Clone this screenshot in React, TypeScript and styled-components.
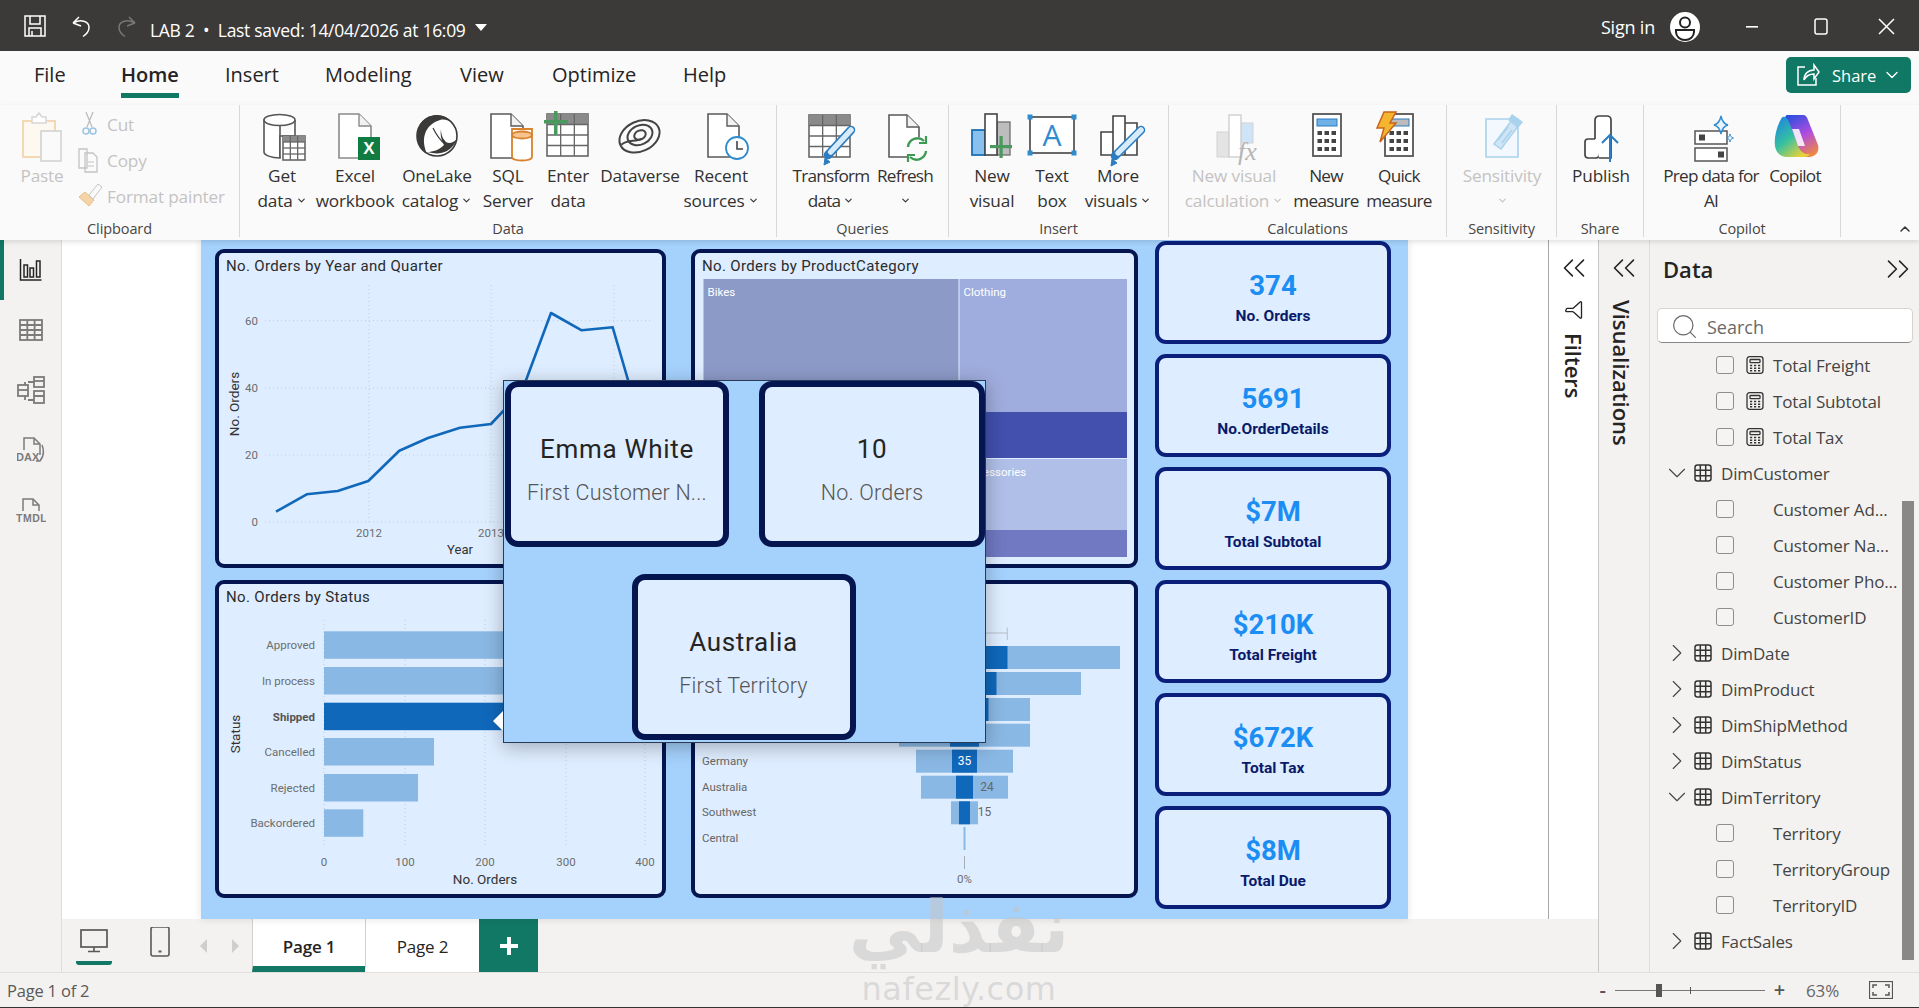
import React from "react"
import styled, { createGlobalStyle } from "styled-components"
import {
  ChevronDown,
  ChevronRight,
  ChevronUp,
  ChevronsLeft,
  ChevronsRight,
  Funnel,
  Search
} from "lucide-react"

const UI_FONT = `"Open Sans", "Noto Sans", sans-serif`
const DIN_FONT = `Roboto, "Liberation Sans", sans-serif`
const GREEN = "#117865"
const NAVY = "#04154f"

const GlobalStyle = createGlobalStyle`
  html, body {
    margin: 0;
    height: 100%;
    overflow: hidden;
    background: #fff;
    font-family: ${UI_FONT};
  }
  * { box-sizing: border-box; }
`

const Shell = styled.div`
  width: 1919px;
  height: 1008px;
  display: flex;
  flex-direction: column;
  position: relative;
  overflow: hidden;
`

/* title bar */
const TitleBar = styled.header`
  height: 51px;
  flex: none;
  background: #3b3a38;
  color: #fff;
  display: flex;
  align-items: center;
  padding-left: 23px;
  font-size: 17.5px;
`
const TitleIcon = styled.svg<{ $gap?: number }>`
  display: block;
  flex: none;
  margin-right: ${p => p.$gap ?? 0}px;
`
const TitleText = styled.span`
  margin: 8px 9px 0 -2px;
  letter-spacing: -0.3px;
  white-space: nowrap;
`
const Caret = styled.span`
  width: 0;
  height: 0;
  border-left: 6.5px solid transparent;
  border-right: 6.5px solid transparent;
  border-top: 7px solid #fff;
  margin-top: 3px;
`
const TitleRight = styled.div`
  margin-left: auto;
  display: flex;
  align-items: center;
  height: 100%;
  padding-top: 2px;
`
const SignIn = styled.span`
  font-size: 18px;
  margin-right: 15px;
  letter-spacing: -0.2px;
`
const Avatar = styled.span`
  width: 30px;
  height: 30px;
  margin-right: 41px;
`
const WinButton = styled.span<{ $ml?: number; $mr?: number }>`
  width: 22px;
  margin-left: ${p => p.$ml ?? 0}px;
  margin-right: ${p => p.$mr ?? 0}px;
  display: flex;
  justify-content: center;
`

/* menu row */
const MenuRow = styled.nav`
  height: 54px;
  flex: none;
  background: #fafafa;
  display: flex;
  padding-left: 34px;
  position: relative;
`
const MenuTab = styled.div<{ $w: number }>`
  width: ${p => p.$w}px;
  flex: none;
`
const MenuLabel = styled.span<{ $active?: boolean }>`
  display: inline-block;
  height: 47px;
  font-size: 20px;
  line-height: 48px;
  color: #252423;
  font-weight: ${p => (p.$active ? 600 : 400)};
  border-bottom: ${p => (p.$active ? `5px solid ${GREEN}` : "5px solid transparent")};
`
const ShareButton = styled.button`
  position: absolute;
  left: 1786px;
  top: 6px;
  width: 125px;
  height: 36px;
  background: ${GREEN};
  color: #fff;
  border: 0;
  border-radius: 5px;
  display: flex;
  align-items: center;
  gap: 12px;
  padding: 0 0 0 10px;
  font: 400 16.5px ${UI_FONT};
`
const ShareChevron = styled(ChevronDown)`
  margin-left: -6px;
`

/* ribbon */
const Ribbon = styled.section`
  height: 135px;
  flex: none;
  background: #fafafa;
  display: flex;
  position: relative;
  z-index: 3;
  box-shadow: 0 2px 5px rgba(0, 0, 0, 0.12);
`
const Group = styled.div<{ $w: number; $pad: number }>`
  width: ${p => p.$w}px;
  height: 132px;
  flex: none;
  display: flex;
  flex-direction: column;
  border-right: 1px solid #d9d8d6;
  > div:first-child {
    padding-left: ${p => p.$pad}px;
  }
`
const GroupItems = styled.div`
  height: 115px;
  flex: none;
  display: flex;
`
const GroupLabel = styled.div`
  text-align: center;
  font-size: 14.5px;
  line-height: 17px;
  color: #484644;
  letter-spacing: -0.1px;
  white-space: nowrap;
`
const BigButton = styled.div<{ $w: number; $off?: boolean }>`
  width: ${p => p.$w}px;
  flex: none;
  display: flex;
  flex-direction: column;
  align-items: center;
  padding-top: 5px;
  color: ${p => (p.$off ? "#c4c3c2" : "#323130")};
`
const IconBox = styled.svg`
  display: block;
  flex: none;
  overflow: visible;
  margin-bottom: 1px;
`
const BigLine = styled.div<{ $tight?: boolean }>`
  font-size: 17.2px;
  line-height: 25px;
  height: 25px;
  letter-spacing: ${p => (p.$tight ? "-0.75px" : "-0.15px")};
  white-space: nowrap;
  display: flex;
  align-items: center;
  gap: 3px;
`
const SmallColumn = styled.div`
  display: flex;
  flex-direction: column;
  gap: 12px;
  padding-top: 7px;
  margin-left: 10px;
`
const SmallButton = styled.div`
  height: 24px;
  display: flex;
  align-items: center;
  font-size: 17.2px;
  color: #c4c3c2;
  letter-spacing: -0.15px;
  white-space: nowrap;
`
const SmallIconSlot = styled.svg`
  width: 26px;
  height: 24px;
  margin-right: 4px;
  flex: none;
  overflow: visible;
`
const CollapseRibbon = styled.span`
  position: absolute;
  left: 1897px;
  top: 115px;
  color: #333;
`

/* workspace */
const Workspace = styled.main`
  flex: 1;
  display: flex;
  min-height: 0;
`
const Rail = styled.aside`
  width: 62px;
  flex: none;
  background: #f3f2f1;
  border-right: 1px solid #dedddb;
`
const RailItem = styled.div<{ $active?: boolean }>`
  height: 60px;
  display: flex;
  align-items: center;
  justify-content: center;
  border-left: 4px solid ${p => (p.$active ? GREEN : "transparent")};
  padding-right: 4px;
`
const CenterColumn = styled.div`
  width: 1536px;
  flex: none;
  display: flex;
  flex-direction: column;
`
const CanvasRow = styled.div`
  height: 679px;
  flex: none;
  display: flex;
`
const Canvas = styled.div`
  width: 1486px;
  flex: none;
  background: #fff;
  padding-left: 139px;
`
const ReportPage = styled.div`
  width: 1207px;
  height: 679px;
  background: #a5d1fd;
  box-shadow: 0 0 8px rgba(0, 0, 0, 0.12);
  position: relative;
  display: flex;
  padding-left: 14px;
  overflow: hidden;
`
const ChartGrid = styled.div`
  width: 923px;
  padding-top: 9px;
  display: grid;
  grid-template-columns: 451px 447px;
  grid-template-rows: 319px 318px;
  column-gap: 25px;
  row-gap: 12px;
`
const ChartCard = styled.div`
  background: #deedff;
  border: 4px solid ${NAVY};
  border-radius: 9px;
  display: flex;
  flex-direction: column;
  overflow: hidden;
`
const ChartTitle = styled.div`
  height: 26px;
  flex: none;
  padding: 4px 0 0 7px;
  font: 400 15px ${DIN_FONT};
  letter-spacing: 0.35px;
  color: #2b2b2b;
`
const Plot = styled.svg`
  display: block;
  flex: none;
`
const AxisText = styled.text<{ $bold?: boolean; $size?: number; $fill?: string }>`
  font-family: ${DIN_FONT};
  font-size: ${p => p.$size ?? 11.5}px;
  font-weight: ${p => (p.$bold ? 700 : 400)};
  fill: ${p => p.$fill ?? "#6d6d6d"};
  dominant-baseline: middle;
`
const CategoryText = styled.text<{ $fill?: string }>`
  font-family: ${DIN_FONT};
  font-size: 11.5px;
  fill: ${p => p.$fill ?? "#666"};
  dominant-baseline: middle;
`
const KpiColumn = styled.div`
  margin-left: 17px;
  width: 236px;
  padding-top: 1px;
  display: flex;
  flex-direction: column;
  gap: 10px;
`
const KpiCard = styled.div`
  height: 103px;
  flex: none;
  background: #deedff;
  border: 4px solid #0a1f7a;
  border-radius: 11px;
  display: flex;
  flex-direction: column;
  align-items: center;
  color: #0a1a6b;
`
const KpiValue = styled.div`
  margin-top: 24px;
  font: 700 27.5px/34px ${DIN_FONT};
  color: #1c8ef3;
`
const KpiLabel = styled.div`
  margin-top: 4px;
  font: 700 15.5px/18px ${DIN_FONT};
`

/* popup that sits over the report */
const Popup = styled.div`
  position: absolute;
  left: 302px;
  top: 140px;
  width: 483px;
  height: 363px;
  background: #a5d1fd;
  border: 1px solid #2a3a55;
  box-shadow: 0 4px 18px rgba(0, 0, 0, 0.28);
  padding: 0 0 0 1px;
  display: flex;
  flex-direction: column;
  gap: 27px;
`
const PopupPointer = styled.span`
  position: absolute;
  left: -11px;
  top: 330px;
  width: 0;
  height: 0;
  border-top: 10px solid transparent;
  border-bottom: 10px solid transparent;
  border-right: 10px solid #fff;
`
const PopupRow = styled.div<{ $center?: boolean }>`
  display: flex;
  justify-content: ${p => (p.$center ? "center" : "space-between")};
  padding-right: ${p => (p.$center ? 3 : 0)}px;
`
const PopupCard = styled.div<{ $w?: number }>`
  width: ${p => p.$w ?? 224}px;
  height: 166px;
  background: #deedff;
  border: 6px solid ${NAVY};
  border-radius: 13px;
  display: flex;
  flex-direction: column;
  align-items: center;
  padding-top: 44px;
`
const PopupValue = styled.div`
  font: 400 26px/36px ${DIN_FONT};
  letter-spacing: 0.7px;
  color: #252423;
  white-space: nowrap;
`
const PopupCaption = styled.div`
  margin-top: 11px;
  font: 300 21.5px/30px ${DIN_FONT};
  letter-spacing: 0.2px;
  color: #555;
  white-space: nowrap;
`

/* filter + viz panes */
const FiltersPane = styled.aside`
  width: 50px;
  flex: none;
  background: #fff;
  border-left: 1px solid #a8a7a5;
  display: flex;
  flex-direction: column;
  align-items: center;
  padding-top: 9px;
  color: #252423;
`
const VizPane = styled.aside`
  width: 52px;
  flex: none;
  background: #f3f2f1;
  border-left: 1px solid #c8c6c4;
  border-right: 1px solid #dedddb;
  display: flex;
  flex-direction: column;
  align-items: center;
  padding-top: 9px;
  color: #252423;
`
const PaneFunnel = styled(Funnel)`
  margin-top: 13px;
  flex: none;
  transform: rotate(90deg);
`
const VerticalLabel = styled.div<{ $shift?: number }>`
  writing-mode: vertical-rl;
  margin-top: 13px;
  margin-right: ${p => p.$shift ?? 0}px;
  font-size: 22px;
  font-weight: 600;
  line-height: 24px;
`

/* data pane */
const DataPane = styled.aside`
  width: 269px;
  flex: none;
  background: #f3f2f1;
  position: relative;
`
const DataHeader = styled.div`
  height: 58px;
  margin-bottom: 10px;
  padding: 0 2px 0 13px;
  display: flex;
  align-items: center;
  justify-content: space-between;
  font-size: 22px;
  font-weight: 600;
  color: #252423;
`
const SearchBox = styled.div`
  margin-left: 7px;
  width: 256px;
  height: 35px;
  background: #fff;
  border: 1px solid #d5d4d2;
  border-bottom-color: #8a8886;
  border-radius: 5px;
  display: flex;
  align-items: center;
  gap: 8px;
  padding: 2px 0 0 12px;
  font-size: 18px;
  color: #6a6968;
`
const Tree = styled.div`
  margin-top: 4px;
`
const TreeRow = styled.div<{ $leaf?: boolean }>`
  height: 36px;
  display: flex;
  align-items: center;
  padding-left: ${p => (p.$leaf ? 66 : 18)}px;
  font-size: 17px;
  letter-spacing: -0.15px;
  color: #454443;
  white-space: nowrap;
`
const Checkbox = styled.span`
  width: 18px;
  height: 18px;
  flex: none;
  border: 1px solid #8f8e8c;
  border-radius: 3px;
  margin-right: 12px;
  background: #f5f4f3;
`
const FieldIcon = styled.svg`
  flex: none;
  display: block;
  margin-right: 9px;
`
const Chevron = styled.span`
  width: 18px;
  flex: none;
  display: flex;
  justify-content: center;
  margin-right: 8px;
  color: #454443;
  > svg {
    flex: none;
  }
`
const ScrollThumb = styled.div`
  position: absolute;
  left: 252px;
  top: 261px;
  width: 12px;
  height: 459px;
  background: #8a8886;
`

/* page tabs */
const PageBar = styled.div`
  height: 53px;
  flex: none;
  background: #f3f2f1;
  display: flex;
  padding-left: 14px;
`
const Device = styled.div<{ $active?: boolean; $mr: number }>`
  width: 36px;
  height: 46px;
  margin-right: ${p => p.$mr}px;
  display: flex;
  justify-content: center;
  padding-top: 8px;
  border-bottom: 4px solid ${p => (p.$active ? GREEN : "transparent")};
  border-radius: 0 0 3px 3px;
`
const PagerArrow = styled.div<{ $mr: number }>`
  width: 10px;
  margin-right: ${p => p.$mr}px;
  display: flex;
  align-items: center;
`
const PageTab = styled.div<{ $active?: boolean; $w: number }>`
  width: ${p => p.$w}px;
  background: #fff;
  border-left: 1px solid #d2d0ce;
  border-bottom: 6px solid ${p => (p.$active ? GREEN : "#fff")};
  display: flex;
  align-items: center;
  justify-content: center;
  padding-top: 7px;
  font-size: 17px;
  font-weight: ${p => (p.$active ? 600 : 400)};
  color: #252423;
  letter-spacing: -0.2px;
`
const AddPage = styled.div`
  width: 59px;
  background: ${GREEN};
  display: flex;
  align-items: center;
  justify-content: center;
`

/* status bar */
const StatusBar = styled.footer`
  height: 36px;
  flex: none;
  background: #f3f2f1;
  border-top: 1px solid #e1dfdd;
  border-bottom: 1px solid #333;
  display: flex;
  align-items: center;
  padding-left: 7px;
  font-size: 16.5px;
  color: #5a5957;
  letter-spacing: -0.2px;
  position: relative;
`
const ZoomBar = styled.div`
  margin-left: auto;
  display: flex;
  align-items: center;
  margin-right: 26px;
`
const ZoomSign = styled.span`
  font-size: 20px;
  font-weight: 600;
  color: #555;
  line-height: 20px;
`
const ZoomTrack = styled.div`
  width: 150px;
  height: 1px;
  background: #777;
  margin: 0 9px;
  position: relative;
`
const ZoomThumb = styled.span`
  position: absolute;
  left: 41px;
  top: -6px;
  width: 6px;
  height: 13px;
  background: #555;
`
const ZoomTick = styled.span`
  position: absolute;
  left: 75px;
  top: -3px;
  width: 1px;
  height: 7px;
  background: #555;
`
const ZoomValue = styled.span`
  margin: 0 30px 0 21px;
  font-size: 17px;
  color: #666;
`

/* faint site mark across the bottom */
const Watermark = styled.div`
  position: absolute;
  left: 853px;
  top: 899px;
  width: 212px;
  display: flex;
  flex-direction: column;
  align-items: center;
  color: rgba(196, 196, 196, 0.55);
  pointer-events: none;
  z-index: 5;
`
const WatermarkArabic = styled.div`
  font: 700 72px/56px "DejaVu Sans", sans-serif;
  white-space: nowrap;
`
const WatermarkLatin = styled.div`
  font: 400 32px/36px "DejaVu Sans", sans-serif;
  margin-top: 16px;
  letter-spacing: 0.5px;
`

const Doc = ({ x = 9, y = 4, w = 31, h = 43, stroke = "#5a5a5a" }: { x?: number; y?: number; w?: number; h?: number; stroke?: string }) => (
  <>
    <path d={`M${x} ${y}h${w - 12}l12 12v${h - 12}h-${w}z`} fill="#fff" stroke={stroke} strokeWidth="1.6" />
    <path d={`M${x + w - 12} ${y}v12h12`} fill="#f2f2f2" stroke={stroke} strokeWidth="1.4" />
  </>
)

const MiniGrid = ({ x, y, w, h, cols = 3, rows = 3, stroke = "#666", head = "#8a8a8a" }: { x: number; y: number; w: number; h: number; cols?: number; rows?: number; stroke?: string; head?: string }) => {
  const lines = []
  for (let i = 1; i < cols; i++) lines.push(<path key={`c${i}`} d={`M${x + (w * i) / cols} ${y}v${h}`} stroke={stroke} strokeWidth="1.3" />)
  for (let i = 1; i <= rows; i++) lines.push(<path key={`r${i}`} d={`M${x} ${y + (h * i) / (rows + 1)}h${w}`} stroke={stroke} strokeWidth="1.3" />)
  return (
    <>
      <rect x={x} y={y} width={w} height={h} fill="#fff" stroke={stroke} strokeWidth="1.6" />
      <rect x={x} y={y} width={w} height={h / (rows + 1)} fill={head} />
      {lines}
    </>
  )
}

const Pencil = ({ x1, y1, x2, y2 }: { x1: number; y1: number; x2: number; y2: number }) => (
  <>
    <path d={`M${x1} ${y1}L${x2} ${y2}`} stroke="#2b7cc0" strokeWidth="8.5" strokeLinecap="round" />
    <path d={`M${x1} ${y1}L${x2 + (x1 - x2) * 0.12} ${y2 + (y1 - y2) * 0.12}`} stroke="#d6ebfa" strokeWidth="5.5" strokeLinecap="round" />
    <path d={`M${x2 - 3} ${y2 + 3}l-1 7 6-3z`} fill="#2b7cc0" stroke="#2b7cc0" />
  </>
)

const Calculator = ({ x, screen }: { x: number; screen: string }) => {
  const keys = []
  for (let r = 0; r < 3; r++) for (let c = 0; c < 3; c++) keys.push(<rect key={`${r}${c}`} x={x + 4.5 + c * 7} y={21 + r * 8} width="4.5" height="4" fill="#444" />)
  return (
    <>
      <rect x={x} y="4" width="28" height="42" fill="#fff" stroke="#555" strokeWidth="1.8" />
      <rect x={x + 4} y="9" width="20" height="7" fill={screen} stroke="#2b7cc0" />
      {keys}
    </>
  )
}

const ribbonIcons: Record<string, React.ReactNode> = {
  getData: (
    <>
      <path d="M6 10v32c0 3 7 6 16 6V10z" fill="#fff" stroke="#555" strokeWidth="1.6" />
      <path d="M37 10v16H22v22" fill="#fff" stroke="#555" strokeWidth="1.6" />
      <ellipse cx="21.5" cy="10" rx="15.5" ry="5.5" fill="#fff" stroke="#555" strokeWidth="1.6" />
      <MiniGrid x={25} y={26} w={22} h={24} />
    </>
  ),
  excel: (
    <>
      <Doc x={8} y={4} w={32} h={44} stroke="#8a8a8a" />
      <rect x="27" y="27" width="22" height="23" fill="#107c41" />
      <text x="38" y="44" textAnchor="middle" fill="#fff" fontFamily="Liberation Sans" fontWeight="700" fontSize="17">X</text>
    </>
  ),
  oneLake: (
    <>
      <circle cx="24" cy="26" r="20" fill="#fff" stroke="#3b3a39" strokeWidth="1.6" />
      <path d="M24 5C12 5 4 14 4 26c0 8 4 14 10 18-3-7-4-14-2-20 2-7 8-12 15-14 4-1 8 0 11 2C36 8 30 5 24 5z" fill="#3b3a39" />
      <path d="M14 42c8 2 14 2 20-1 5-3 8-7 10-12-4 4-8 5-11 3-3-3-5-7-5-13-1 5 0 11 3 16-5 5-11 7-17 7z" fill="#3b3a39" />
      <path d="M20 18c4 8 8 13 12 16" fill="none" stroke="#3b3a39" strokeWidth="1.2" />
    </>
  ),
  sql: (
    <>
      <Doc x={7} y={4} w={32} h={44} />
      <path d="M28 18v28c0 2 4 3.500 10 3.500s10-1.500 10-3.500V18z" fill="#fff" stroke="#d9822b" strokeWidth="1.8" transform="translate(0 1)" />
      <ellipse cx="38" cy="25" rx="10" ry="3.500" fill="#f6c48e" stroke="#d9822b" strokeWidth="1.8" />
    </>
  ),
  enterData: (
    <>
      <MiniGrid x={3} y={4} w={41} h={42} rows={3} />
      <rect x="0" y="10" width="24" height="3.5" fill="#4a9a5e" />
      <rect x="10" y="1" width="3.5" height="24" fill="#4a9a5e" />
    </>
  ),
  dataverse: (
    <g fill="none" stroke="#444" strokeWidth="2" transform="rotate(-25 24 25)">
      <ellipse cx="23" cy="26" rx="21" ry="15" />
      <ellipse cx="24" cy="25" rx="13" ry="9.500" />
      <ellipse cx="24" cy="25" rx="6" ry="4.500" />
      <path d="M3 26c8-3 14 4 21 3" />
    </g>
  ),
  recent: (
    <>
      <Doc x={11} y={4} w={31} h={43} />
      <circle cx="40" cy="38" r="11" fill="#fff" stroke="#2f8ccf" strokeWidth="1.8" />
      <path d="M40 31v8h6" fill="none" stroke="#444" strokeWidth="1.6" />
    </>
  ),
  transform: (
    <>
      <MiniGrid x={2} y={5} w={41} h={42} rows={3} />
      <Pencil x1={44} y1={20} x2={21} y2={45} />
    </>
  ),
  refresh: (
    <>
      <Doc x={8} y={5} w={30} h={42} />
      <circle cx="36" cy="39" r="12" fill="#fafafa" />
      <path d="M27 37a9.500 9.500 0 0 1 16-6M45 41a9.500 9.500 0 0 1-16 6" fill="none" stroke="#3d9a55" strokeWidth="2.4" />
      <path d="M45 26v7h-7M27 52v-7h7" fill="none" stroke="#3d9a55" strokeWidth="2.2" />
    </>
  ),
  newVisual: (
    <>
      <rect x="4" y="20" width="13" height="25" fill="#8ac0ee" stroke="#1a6fb5" strokeWidth="1.8" />
      <rect x="29" y="12" width="13" height="33" fill="#bdbdbd" stroke="#777" strokeWidth="1.4" />
      <rect x="17" y="4" width="12" height="41" fill="#fff" stroke="#444" strokeWidth="1.6" />
      <rect x="22" y="35" width="22" height="3.200" fill="#4a9a5e" />
      <rect x="31.500" y="26" width="3.200" height="22" fill="#4a9a5e" />
    </>
  ),
  textBox: (
    <>
      <rect x="2" y="7" width="44" height="36" fill="#fff" stroke="#444" strokeWidth="1.6" />
      {[[2, 7], [46, 7], [2, 43], [46, 43]].map(([cx, cy]) => (
        <rect key={`${cx}${cy}`} x={cx - 2.5} y={cy - 2.5} width="5" height="5" fill="#2f8ccf" />
      ))}
      <text x="24" y="36" textAnchor="middle" fill="#2f8ccf" fontFamily="Open Sans" fontSize="30">A</text>
    </>
  ),
  moreVisuals: (
    <>
      <path d="M7 22h12v23H7zM19 6h12v39H19zM31 13h12v32H31z" fill="#fff" stroke="#444" strokeWidth="1.6" />
      <Pencil x1={47} y1={20} x2={21} y2={46} />
    </>
  ),
  newCalc: (
    <>
      <rect x="7" y="22" width="12" height="25" fill="#e4e4e4" stroke="#d2d2d2" />
      <rect x="31" y="13" width="12" height="20" fill="#cfe4f7" stroke="#d2d2d2" />
      <rect x="19" y="5" width="12" height="42" fill="#fff" stroke="#cfcfcf" strokeWidth="1.4" />
      <text x="28" y="50" fill="#b5b5b5" fontFamily="Liberation Serif" fontStyle="italic" fontSize="26">fx</text>
    </>
  ),
  newMeasure: <Calculator x={11} screen="#6fb2e8" />,
  quickMeasure: (
    <>
      <Calculator x={10} screen="#bcbcbc" />
      <path d="M9 2h12L15 13h6L5 32l4-14H2z" fill="#f5b52e" stroke="#c8641e" strokeWidth="1.5" />
    </>
  ),
  sensitivity: (
    <>
      <path d="M8 9h32v38H8z" fill="#f2f8fd" stroke="#a9d2ec" strokeWidth="1.6" />
      <path d="M16 34L34 10l7 5-18 24z" fill="#cfe4f4" stroke="#a9d2ec" strokeWidth="1.4" />
      <path d="M20 30L30 17M24 33l10-13" stroke="#a9d2ec" strokeWidth="1.4" />
      <path d="M34 4l11 8-5 6-10-8z" fill="#a9d2ec" />
    </>
  ),
  publish: (
    <>
      <rect x="8" y="29" width="14" height="19" rx="3" fill="#fff" stroke="#444" strokeWidth="1.700" />
      <path d="M18 29V10a4 4 0 0 1 4-4h8a4 4 0 0 1 4 4v38H22" fill="#fff" stroke="#444" strokeWidth="1.700" />
      <path d="M33 52V25M25 33l8-8 8 8" fill="none" stroke="#2b7cc0" strokeWidth="2" />
    </>
  ),
  prepData: (
    <g transform="translate(3 0)">
      <rect x="5" y="21" width="32" height="13" fill="#fff" stroke="#555" strokeWidth="1.500" />
      <rect x="9" y="24.500" width="6" height="6" fill="#444" />
      <rect x="5" y="38" width="32" height="13" fill="#fff" stroke="#555" strokeWidth="1.500" />
      <rect x="28" y="41.500" width="6" height="6" fill="#444" />
      <path d="M31 6c1 5 3 8 7 9-4 1-6 4-7 9-1-5-3-8-7-9 4-1 6-4 7-9z" fill="#eaf4fc" stroke="#2f8ccf" strokeWidth="1.400" />
      <path d="M40 24c.5 2.500 1.500 3.500 3.500 4-2 .5-3 1.500-3.500 4-.5-2.500-1.500-3.500-3.500-4 2-.5 3-1.500 3.500-4z" fill="#eaf4fc" stroke="#2f8ccf" />
    </g>
  ),
  copilot: (
    <g transform="translate(2 0)">
      <defs>
        <linearGradient id="copA" x1="0" y1="0" x2="0.7" y2="1">
          <stop offset="0" stopColor="#1a7fe8" />
          <stop offset="0.55" stopColor="#35c1a0" />
          <stop offset="1" stopColor="#e8d13a" />
        </linearGradient>
        <linearGradient id="copB" x1="0.3" y1="0" x2="0.8" y2="1">
          <stop offset="0" stopColor="#2f4fe0" />
          <stop offset="0.5" stopColor="#b04ce0" />
          <stop offset="1" stopColor="#f28a3c" />
        </linearGradient>
      </defs>
      <path d="M14 5h16c3 0 4 2 5 5l10 25c2 7-3 12-9 12h-8c-3 0-5-2-6-5L14 18c-2-2-3-3-6 0l4-10c.5-2 1-3 2-3z" fill="url(#copB)" />
      <path d="M8 9c-5 9-7 19-6 27 1 7 6 11 12 11h17c3 0 5-1 6-3-4 1-9-1-12-8L16 12c-2-5-6-7-8-3z" fill="url(#copA)" />
      <path d="M19 19h7l6 17h-7z" fill="#fff" opacity="0.85" />
    </g>
  )
}

type RibbonItem = { icon: string; w: number; lines: string[]; carets?: number; off?: boolean; tight?: boolean }
type RibbonGroup = { label: string; w: number; pad: number; items: RibbonItem[] }

const ribbonGroups: RibbonGroup[] = [
  {
    label: "Data", w: 537, pad: 6, items: [
      { icon: "getData", w: 72, lines: ["Get", "data"], carets: 1 },
      { icon: "excel", w: 74, lines: ["Excel", "workbook"] },
      { icon: "oneLake", w: 90, lines: ["OneLake", "catalog"], carets: 1 },
      { icon: "sql", w: 52, lines: ["SQL", "Server"] },
      { icon: "enterData", w: 68, lines: ["Enter", "data"] },
      { icon: "dataverse", w: 76, lines: ["Dataverse"] },
      { icon: "recent", w: 86, lines: ["Recent", "sources"], carets: 1 }
    ]
  },
  {
    label: "Queries", w: 172, pad: 17, items: [
      { icon: "transform", w: 74, lines: ["Transform", "data"], carets: 1, tight: true },
      { icon: "refresh", w: 74, lines: ["Refresh", ""], carets: 1, tight: true }
    ]
  },
  {
    label: "Insert", w: 220, pad: 13, items: [
      { icon: "newVisual", w: 60, lines: ["New", "visual"] },
      { icon: "textBox", w: 60, lines: ["Text", "box"] },
      { icon: "moreVisuals", w: 72, lines: ["More", "visuals"], carets: 1 }
    ]
  },
  {
    label: "Calculations", w: 278, pad: 14, items: [
      { icon: "newCalc", w: 102, lines: ["New visual", "calculation"], carets: 1, off: true },
      { icon: "newMeasure", w: 82, lines: ["New", "measure"], tight: true },
      { icon: "quickMeasure", w: 64, lines: ["Quick", "measure"], tight: true }
    ]
  },
  { label: "Sensitivity", w: 110, pad: 10, items: [{ icon: "sensitivity", w: 90, lines: ["Sensitivity", ""], carets: 1, off: true }] },
  { label: "Share", w: 87, pad: 8, items: [{ icon: "publish", w: 72, lines: ["Publish"] }] },
  {
    label: "Copilot", w: 197, pad: 19, items: [
      { icon: "prepData", w: 96, lines: ["Prep data for", "AI"], tight: true },
      { icon: "copilot", w: 72, lines: ["Copilot"], tight: true }
    ]
  }
]

const RibbonButton = ({ item }: { item: RibbonItem }) => (
  <BigButton $w={item.w} $off={item.off}>
    <IconBox width="48" height="52" viewBox="0 0 48 52">
      {ribbonIcons[item.icon]}
    </IconBox>
    {item.lines.map((line, i) => (
      <BigLine key={i} $tight={item.tight}>
        {line}
        {item.carets && i === item.lines.length - 1 ? <ChevronDown size={11} strokeWidth={2.4} /> : null}
      </BigLine>
    ))}
  </BigButton>
)

const ClipboardGroup = () => (
  <Group $w={240} $pad={17}>
    <GroupItems>
      <BigButton $w={50} $off>
        <IconBox width="48" height="52" viewBox="0 0 48 52">
          <path d="M5 11h32v36H5z" fill="#fdf8f0" stroke="#f2d9b4" strokeWidth="2" />
          <path d="M14 11V7h4l3-4 3 4h4v6H14z" fill="#fff" stroke="#d6d6d6" strokeWidth="1.500" />
          <rect x="23" y="21" width="20" height="30" fill="#fafafa" stroke="#d0d0d0" strokeWidth="1.500" />
        </IconBox>
        <BigLine>Paste</BigLine>
      </BigButton>
      <SmallColumn>
        <SmallButton>
          <SmallIconSlot viewBox="0 0 26 24">
            <path d="M9 0l6 15M16 0l-6 15" stroke="#bdbdbd" strokeWidth="1.300" />
            <circle cx="9" cy="19" r="3" fill="none" stroke="#9cc5e4" strokeWidth="1.500" />
            <circle cx="16" cy="19" r="3" fill="none" stroke="#9cc5e4" strokeWidth="1.500" />
          </SmallIconSlot>
          Cut
        </SmallButton>
        <SmallButton>
          <SmallIconSlot viewBox="0 0 26 24">
            <path d="M2 1h8v19H2zM8 5h8l4 4v15H8z" fill="#fafafa" stroke="#c4c4c4" strokeWidth="1.300" />
            <path d="M11 14h6M11 18h6" stroke="#c4c4c4" />
          </SmallIconSlot>
          Copy
        </SmallButton>
        <SmallButton>
          <SmallIconSlot viewBox="0 0 26 24">
            <path d="M2 13l10 9 5-6-9-8z" fill="#f7d4a8" stroke="#e8bd8c" />
            <path d="M12 11l9-11 4 3-9 12z" fill="#fafafa" stroke="#c4c4c4" />
          </SmallIconSlot>
          Format painter
        </SmallButton>
      </SmallColumn>
    </GroupItems>
    <GroupLabel>Clipboard</GroupLabel>
  </Group>
)

const railIcons = [
  <svg key="r" width="24" height="22" viewBox="0 0 24 22" fill="none" stroke="#252423" strokeWidth="1.500">
    <path d="M1.500 0v21h21" />
    <rect x="5" y="6" width="3.500" height="12" />
    <rect x="11" y="9" width="3.500" height="9" />
    <rect x="17.500" y="2" width="3.500" height="16" />
  </svg>,
  <svg key="t" width="26" height="24" viewBox="0 0 26 24" fill="none" stroke="#7c7b79" strokeWidth="1.800">
    <rect x="2" y="2" width="22" height="20" />
    <path d="M2 7h22M2 12h22M2 17h22M9.300 2v20M16.600 2v20" />
  </svg>,
  <svg key="m" width="28" height="28" viewBox="0 0 28 28" fill="none" stroke="#7c7b79" strokeWidth="1.800">
    <rect x="1" y="9" width="10" height="11" />
    <path d="M1 14h10" />
    <rect x="17" y="1" width="10" height="10" />
    <path d="M17 5h10" />
    <rect x="17" y="15" width="10" height="12" />
    <path d="M17 20h10M11 6h6M8 9V6M11 24h6M8 20v4" />
  </svg>,
  <svg key="d" width="28" height="28" viewBox="0 0 28 28" fill="none" stroke="#7c7b79" strokeWidth="1.500">
    <path d="M7 14V2h10l6 6v11" />
    <path d="M17 2v6h6" />
    <path d="M25 9c2 5 2 11-2 16h-4" />
    <text x="-1" y="25" fill="#7c7b79" stroke="none" fontFamily="Liberation Sans" fontWeight="700" fontSize="11">DAX</text>
  </svg>,
  <svg key="m2" width="30" height="26" viewBox="0 0 30 26" fill="none" stroke="#7c7b79" strokeWidth="1.500">
    <path d="M7 14V2h10l6 6v6" />
    <path d="M17 2v6h6" />
    <text x="0" y="25" fill="#7c7b79" stroke="none" fontFamily="Liberation Sans" fontWeight="700" fontSize="10.500" letterSpacing="0.500">TMDL</text>
  </svg>
]

const linePoints = "276,511.700 306.700,494.300 337.700,491 368.300,481 399.300,450.700 428,438 460,427.700 491,424 522,391 551,313 581.700,330.300 612.700,327.300 628,380 643,430"

const LineChart = () => (
  <Plot width="443" height="285" viewBox="219 279 443 285">
    {[320.7, 388, 455, 522].map(y => (
      <line key={y} x1="265" x2="650" y1={y} y2={y} stroke="#c4ccd6" strokeDasharray="1 3" />
    ))}
    {[369, 491, 614].map(x => (
      <line key={x} x1={x} x2={x} y1="285" y2="522" stroke="#c4ccd6" strokeDasharray="1 3" />
    ))}
    {[["60", 322], ["40", 389], ["20", 456], ["0", 523]].map(([t, y]) => (
      <AxisText key={t} x="258" y={y} textAnchor="end">{t}</AxisText>
    ))}
    <AxisText x="369" y="533.500" textAnchor="middle">2012</AxisText>
    <AxisText x="491" y="533.500" textAnchor="middle">2013</AxisText>
    <AxisText x="460" y="551" textAnchor="middle" $size={13} $fill="#333">Year</AxisText>
    <AxisText x="235" y="404" textAnchor="middle" $size={13.500} $fill="#333" transform="rotate(-90 235 404)">No. Orders</AxisText>
    <polyline points={linePoints} fill="none" stroke="#1068bb" strokeWidth="2.600" strokeLinejoin="round" />
  </Plot>
)

const TreemapCell = ({ x, y, w, h, fill, label }: { x: number; y: number; w: number; h: number; fill: string; label?: string }) => (
  <>
    <rect x={x} y={y} width={w} height={h} fill={fill} />
    {label ? <CategoryText x={x + 4} y={y + 14} $fill="#fff">{label}</CategoryText> : null}
  </>
)

const Treemap = () => (
  <Plot width="439" height="285" viewBox="695 279 439 285">
    <TreemapCell x={703.500} y={279} w={255} h={278} fill="#8c9ac8" label="Bikes" />
    <TreemapCell x={959.500} y={279} w={167.500} h={133} fill="#9fadde" label="Clothing" />
    <TreemapCell x={959.500} y={412} w={167.500} h={46} fill="#4350ae" />
    <TreemapCell x={959.500} y={459} w={167.500} h={71} fill="#b0bfe8" label="Accessories" />
    <TreemapCell x={959.500} y={530} w={167.500} h={27} fill="#7079c2" />
  </Plot>
)

const statusRows = [
  { label: "Approved", y: 631.300, end: 600 },
  { label: "In process", y: 667, end: 580 },
  { label: "Shipped", y: 702.700, end: 560, active: true },
  { label: "Cancelled", y: 738, end: 434 },
  { label: "Rejected", y: 774, end: 418 },
  { label: "Backordered", y: 809.300, end: 363.300 }
]

const StatusChart = () => (
  <Plot width="443" height="284" viewBox="219 610 443 284">
    {[324, 405, 485, 566, 645].map(x => (
      <line key={x} x1={x} x2={x} y1="620" y2="848" stroke="#c4ccd6" strokeDasharray="1 3" />
    ))}
    {statusRows.map(r => (
      <React.Fragment key={r.label}>
        <rect x="324" y={r.y} width={r.end - 324} height="27.500" fill={r.active ? "#1068bb" : "#8ab8e4"} />
        <AxisText x="315" y={r.y + 15} textAnchor="end" $bold={r.active} $fill={r.active ? "#555" : "#6d6d6d"}>
          {r.label}
        </AxisText>
      </React.Fragment>
    ))}
    {[["0", 324], ["100", 405], ["200", 485], ["300", 566], ["400", 645]].map(([t, x]) => (
      <AxisText key={t} x={x} y="863" textAnchor="middle">{t}</AxisText>
    ))}
    <AxisText x="485" y="880" textAnchor="middle" $size={13.500} $fill="#333">No. Orders</AxisText>
    <AxisText x="236" y="734" textAnchor="middle" $size={13.500} $fill="#333" transform="rotate(-90 236 734)">Status</AxisText>
  </Plot>
)

const CENTER = 964.500
const funnelRows = [
  { y: 646, half: 155.500, dark: 43 },
  { y: 672, half: 116.500, dark: 32 },
  { y: 698, half: 65.500, dark: 24 },
  { y: 723.700, half: 65.500, dark: 14.500 },
  { y: 749.700, x0: 916, x1: 1013, dark: 12.500, label: "Germany", value: "35", inside: true },
  { y: 775.700, x0: 921, x1: 1008, dark: 8.500, label: "Australia", value: "24", vx: 987 },
  { y: 801.300, x0: 951, x1: 978, dark: 5.500, label: "Southwest", value: "15", vx: 984.500 },
  { y: 827, x0: 963.500, x1: 965.500, dark: 0, label: "Central" }
]

const FunnelChart = () => (
  <Plot width="439" height="284" viewBox="695 610 439 284">
    <path d="M809 633H1007.300M1007.300 627.500V640" stroke="#b9bec6" fill="none" />
    {funnelRows.map(r => {
      const x0 = r.x0 ?? CENTER - (r.half as number)
      const x1 = r.x1 ?? CENTER + (r.half as number)
      return (
        <React.Fragment key={r.y}>
          <rect x={x0} y={r.y} width={x1 - x0} height="23" fill="#8ab8e4" />
          <rect x={CENTER - r.dark} y={r.y} width={r.dark * 2} height="23" fill="#1068bb" />
          {r.label ? <CategoryText x="702" y={r.y + 12}>{r.label}</CategoryText> : null}
          {r.value ? (
            <AxisText x={r.inside ? CENTER : r.vx} y={r.y + 12} textAnchor="middle" $size={12} $fill={r.inside ? "#fff" : "#666"}>
              {r.value}
            </AxisText>
          ) : null}
        </React.Fragment>
      )
    })}
    <line x1={CENTER} x2={CENTER} y1="856" y2="869" stroke="#a9aeb6" />
    <AxisText x={CENTER} y="879.500" textAnchor="middle">0%</AxisText>
  </Plot>
)

const kpis = [
  ["374", "No. Orders"],
  ["5691", "No.OrderDetails"],
  ["$7M", "Total Subtotal"],
  ["$210K", "Total Freight"],
  ["$672K", "Total Tax"],
  ["$8M", "Total Due"]
]

const menuTabs: [string, number][] = [["File", 87], ["Home", 104], ["Insert", 100], ["Modeling", 135], ["View", 92], ["Optimize", 131], ["Help", 50]]

const CalcIcon = () => (
  <FieldIcon width="18" height="18" viewBox="0 0 18 18" fill="none" stroke="#333" strokeWidth="1.300">
    <rect x="1" y="0.700" width="16" height="16.600" rx="2.500" />
    <rect x="4" y="3.500" width="10" height="3.200" rx="0.800" />
    <path d="M4 9.500h2.200M8 9.500h2.200M12 9.500h2.200M4 12.200h2.200M8 12.200h2.200M12 12.200h2.200M4 14.800h2.200M8 14.800h2.200M12 14.800h2.200" strokeWidth="1.600" />
  </FieldIcon>
)
const TableIcon = () => (
  <FieldIcon width="18" height="18" viewBox="0 0 18 18" fill="none" stroke="#333" strokeWidth="1.500">
    <rect x="1" y="1" width="16" height="16" rx="2.500" />
    <path d="M1 6.300h16M1 11.700h16M6.300 1v16M11.700 1v16" />
  </FieldIcon>
)

type TreeEntry = { label: string; kind: "measure" | "column" | "closed" | "open" }
const treeEntries: TreeEntry[] = [
  { label: "Total Freight", kind: "measure" },
  { label: "Total Subtotal", kind: "measure" },
  { label: "Total Tax", kind: "measure" },
  { label: "DimCustomer", kind: "open" },
  { label: "Customer Ad...", kind: "column" },
  { label: "Customer Na...", kind: "column" },
  { label: "Customer Pho...", kind: "column" },
  { label: "CustomerID", kind: "column" },
  { label: "DimDate", kind: "closed" },
  { label: "DimProduct", kind: "closed" },
  { label: "DimShipMethod", kind: "closed" },
  { label: "DimStatus", kind: "closed" },
  { label: "DimTerritory", kind: "open" },
  { label: "Territory", kind: "column" },
  { label: "TerritoryGroup", kind: "column" },
  { label: "TerritoryID", kind: "column" },
  { label: "FactSales", kind: "closed" }
]

const TreeItem = ({ entry }: { entry: TreeEntry }) => {
  if (entry.kind === "open" || entry.kind === "closed") {
    return (
      <TreeRow>
        <Chevron>
          {entry.kind === "open" ? <ChevronDown size={30} strokeWidth={0.900} /> : <ChevronRight size={30} strokeWidth={0.900} />}
        </Chevron>
        <TableIcon />
        {entry.label}
      </TreeRow>
    )
  }
  return (
    <TreeRow $leaf>
      <Checkbox />
      {entry.kind === "measure" ? <CalcIcon /> : <FieldIcon width="18" height="18" />}
      {entry.label}
    </TreeRow>
  )
}

export default function App() {
  return (
    <>
      <GlobalStyle />
      <Shell>
        <TitleBar>
          <TitleIcon $gap={24} width="24" height="24" viewBox="0 0 24 24" fill="none" stroke="#fff" strokeWidth="1.500">
            <path d="M2 2h20v20H2zM7 2v8h10V2M6 22v-8h12v8M9 22v-5" />
          </TitleIcon>
          <TitleIcon $gap={22} width="22" height="24" viewBox="0 0 22 24" fill="none" stroke="#fff" strokeWidth="1.500">
            <path d="M2 9l6-6M2 9l8 3M3 8.500c6-3 15-2 15 5 0 4-3 7-6 9" />
          </TitleIcon>
          <TitleIcon $gap={15} width="22" height="24" viewBox="0 0 22 24" fill="none" stroke="#777" strokeWidth="1.500">
            <path d="M20 9l-6-6M20 9l-8 3M19 8.500c-6-3-15-2-15 5 0 4 3 7 6 9" />
          </TitleIcon>
          <TitleText>LAB 2 &nbsp;•&nbsp; Last saved: 14/04/2026 at 16:09</TitleText>
          <Caret />
          <TitleRight>
            <SignIn>Sign in</SignIn>
            <Avatar>
              <svg width="30" height="30" viewBox="0 0 30 30">
                <circle cx="15" cy="15" r="15" fill="#fff" />
                <circle cx="15" cy="10.500" r="5" fill="none" stroke="#222" strokeWidth="2" />
                <path d="M6 18h18v2a9 8 0 0 1-18 0z" fill="none" stroke="#222" strokeWidth="2" />
              </svg>
            </Avatar>
            <WinButton>
              <svg width="12" height="2"><rect width="12" height="1.600" fill="#fff" /></svg>
            </WinButton>
            <WinButton $ml={47}>
              <svg width="14" height="17" fill="none" stroke="#fff" strokeWidth="1.500"><rect x="1" y="1" width="12" height="15" rx="2" /></svg>
            </WinButton>
            <WinButton $ml={43} $mr={22}>
              <svg width="17" height="17" fill="none" stroke="#fff" strokeWidth="1.500"><path d="M1 1l15 15M16 1L1 16" /></svg>
            </WinButton>
          </TitleRight>
        </TitleBar>

        <MenuRow>
          {menuTabs.map(([t, w]) => (
            <MenuTab key={t} $w={w}>
              <MenuLabel $active={t === "Home"}>{t}</MenuLabel>
            </MenuTab>
          ))}
          <ShareButton>
            <svg width="24" height="24" viewBox="0 0 24 24" fill="none" stroke="#fff" strokeWidth="1.500">
              <path d="M9 4H2v18h18v-7" />
              <path d="M8 17c0-6 4-10 10-10V2l5 7-5 7v-5c-4 0-8 2-10 6z" />
            </svg>
            Share
            <ShareChevron size={20} strokeWidth={1.600} />
          </ShareButton>
        </MenuRow>

        <Ribbon>
          <ClipboardGroup />
          {ribbonGroups.map(g => (
            <Group key={g.label} $w={g.w} $pad={g.pad}>
              <GroupItems>
                {g.items.map(item => (
                  <RibbonButton key={item.icon} item={item} />
                ))}
              </GroupItems>
              <GroupLabel>{g.label}</GroupLabel>
            </Group>
          ))}
          <CollapseRibbon>
            <ChevronUp size={16} strokeWidth={2.200} />
          </CollapseRibbon>
        </Ribbon>

        <Workspace>
          <Rail>
            {railIcons.map((icon, i) => (
              <RailItem key={i} $active={i === 0}>{icon}</RailItem>
            ))}
          </Rail>
          <CenterColumn>
            <CanvasRow>
              <Canvas>
                <ReportPage>
                  <ChartGrid>
                    <ChartCard>
                      <ChartTitle>No. Orders by Year and Quarter</ChartTitle>
                      <LineChart />
                    </ChartCard>
                    <ChartCard>
                      <ChartTitle>No. Orders by ProductCategory</ChartTitle>
                      <Treemap />
                    </ChartCard>
                    <ChartCard>
                      <ChartTitle>No. Orders by Status</ChartTitle>
                      <StatusChart />
                    </ChartCard>
                    <ChartCard>
                      <ChartTitle />
                      <FunnelChart />
                    </ChartCard>
                  </ChartGrid>
                  <KpiColumn>
                    {kpis.map(([value, label]) => (
                      <KpiCard key={label}>
                        <KpiValue>{value}</KpiValue>
                        <KpiLabel>{label}</KpiLabel>
                      </KpiCard>
                    ))}
                  </KpiColumn>
                  <Popup>
                    <PopupPointer />
                    <PopupRow>
                      <PopupCard>
                        <PopupValue>Emma White</PopupValue>
                        <PopupCaption>First Customer N...</PopupCaption>
                      </PopupCard>
                      <PopupCard $w={226}>
                        <PopupValue>10</PopupValue>
                        <PopupCaption>No. Orders</PopupCaption>
                      </PopupCard>
                    </PopupRow>
                    <PopupRow $center>
                      <PopupCard>
                        <PopupValue>Australia</PopupValue>
                        <PopupCaption>First Territory</PopupCaption>
                      </PopupCard>
                    </PopupRow>
                  </Popup>
                </ReportPage>
              </Canvas>
              <FiltersPane>
                <ChevronsLeft size={38} strokeWidth={1} />
                <PaneFunnel size={20} strokeWidth={1.600} />
                <VerticalLabel>Filters</VerticalLabel>
              </FiltersPane>
            </CanvasRow>
            <PageBar>
              <Device $active $mr={30}>
                <svg width="28" height="26" viewBox="0 0 28 26" fill="none" stroke="#5a5957" strokeWidth="1.700">
                  <rect x="1" y="3" width="26" height="17" />
                  <path d="M14 20v4M8 24.500h12" />
                </svg>
              </Device>
              <Device $mr={21}>
                <svg width="20" height="30" viewBox="0 0 20 30" fill="none" stroke="#5a5957" strokeWidth="1.600">
                  <rect x="1" y="0" width="18" height="29" rx="2" />
                  <path d="M8.500 24.500h3" strokeWidth="2" />
                </svg>
              </Device>
              <PagerArrow $mr={23}>
                <svg width="8" height="14"><path d="M8 0v14L1 7z" fill="#cfcecc" /></svg>
              </PagerArrow>
              <PagerArrow $mr={10}>
                <svg width="8" height="14"><path d="M0 0v14l7-7z" fill="#cfcecc" /></svg>
              </PagerArrow>
              <PageTab $active $w={113}>Page 1</PageTab>
              <PageTab $w={114}>Page 2</PageTab>
              <AddPage>
                <svg width="18" height="18"><path d="M9 0v18M0 9h18" stroke="#fff" strokeWidth="4" /></svg>
              </AddPage>
            </PageBar>
          </CenterColumn>
          <VizPane>
            <ChevronsLeft size={38} strokeWidth={1} />
            <VerticalLabel $shift={5}>Visualizations</VerticalLabel>
          </VizPane>
          <DataPane>
            <DataHeader>
              Data
              <ChevronsRight size={38} strokeWidth={1} />
            </DataHeader>
            <SearchBox>
              <Search size={29} strokeWidth={1} />
              Search
            </SearchBox>
            <Tree>
              {treeEntries.map(entry => (
                <TreeItem key={entry.label} entry={entry} />
              ))}
            </Tree>
            <ScrollThumb />
          </DataPane>
        </Workspace>

        <StatusBar>
          Page 1 of 2
          <ZoomBar>
            <ZoomSign>-</ZoomSign>
            <ZoomTrack>
              <ZoomThumb />
              <ZoomTick />
            </ZoomTrack>
            <ZoomSign>+</ZoomSign>
            <ZoomValue>63%</ZoomValue>
            <svg width="24" height="18" viewBox="0 0 24 18" fill="none" stroke="#555" strokeWidth="1.200">
              <rect x="0.500" y="0.500" width="23" height="17" />
              <path d="M4 7V4h4M16 4h4v3M4 11v3h4M16 14h4v-3" strokeWidth="1.500" />
            </svg>
          </ZoomBar>
        </StatusBar>

        <Watermark>
          <WatermarkArabic dir="rtl">نفذلي</WatermarkArabic>
          <WatermarkLatin>nafezly.com</WatermarkLatin>
        </Watermark>
      </Shell>
    </>
  )
}
